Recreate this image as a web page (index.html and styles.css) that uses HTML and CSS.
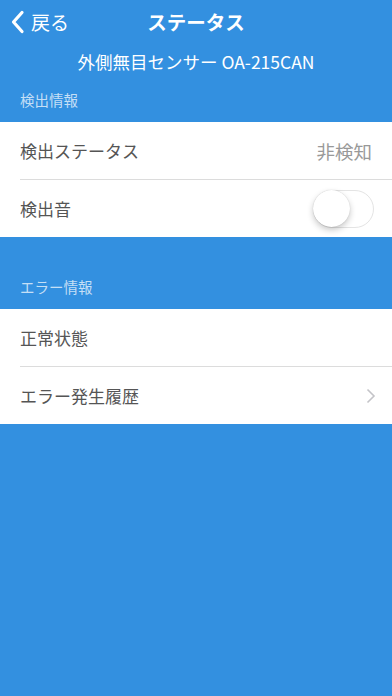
FILE: index.html
```html
<!DOCTYPE html>
<html lang="ja">
<head>
    <meta charset="UTF-8">
    <meta name="viewport" content="width=device-width, initial-scale=1.0">
    <title>ステータス</title>
    <link rel="stylesheet" href="styles.css">
</head>
<body>
    <header class="navbar">
        <a class="back" href="#">
            <svg width="15" height="24" viewBox="0 0 15 24"><path d="M12 2.5 L3.5 12 L12 21.5" fill="none" stroke="#fff" stroke-width="3.2" stroke-linecap="round" stroke-linejoin="round"/></svg>
            <span>戻る</span>
        </a>
        <h1 class="title">ステータス</h1>
    </header>

    <div class="device-name">外側無目センサー OA-215CAN</div>

    <div class="section-header">検出情報</div>
    <ul class="group">
        <li class="row">
            <span class="label">検出ステータス</span>
            <span class="value">非検知</span>
        </li>
        <li class="row">
            <span class="label">検出音</span>
            <span class="switch"><span class="knob"></span></span>
        </li>
    </ul>

    <div class="section-header spaced">エラー情報</div>
    <ul class="group">
        <li class="row">
            <span class="label">正常状態</span>
        </li>
        <li class="row">
            <span class="label">エラー発生履歴</span>
            <svg class="chevron" width="10" height="16" viewBox="0 0 10 16"><path d="M1.5 1.5 L8 8 L1.5 14.5" fill="none" stroke="#c4c4c8" stroke-width="1.6"/></svg>
        </li>
    </ul>
</body>
</html>
```

FILE: styles.css
```css
* {
    margin: 0;
    padding: 0;
    box-sizing: border-box;
}

body {
    font-family: "Noto Sans CJK JP", "Noto Sans", sans-serif;
    background: #3390e0;
    min-height: 100vh;
    color: #fff;
}

.navbar {
    position: relative;
    height: 44px;
    display: flex;
    align-items: center;
    justify-content: center;
}

.back {
    position: absolute;
    left: 10px;
    top: 10px;
    display: flex;
    align-items: center;
    gap: 6px;
    color: #fff;
    text-decoration: none;
    font-size: 19px;
}

.back span {
    line-height: 24px;
}

.title {
    font-size: 19.5px;
    font-weight: bold;
    line-height: 24px;
}

.device-name {
    text-align: center;
    font-size: 17.5px;
    line-height: 22px;
    padding-top: 7px;
}

.section-header {
    font-size: 14.5px;
    color: rgba(255, 255, 255, 0.72);
    line-height: 20px;
    padding: 17px 20px 0;
    height: 49px;
}

.section-header.spaced {
    padding-top: 40px;
    height: 72px;
}

.group {
    list-style: none;
    background: #fff;
}

.row {
    height: 57px;
    margin-left: 20px;
    padding-right: 18px;
    display: flex;
    align-items: center;
    justify-content: space-between;
    font-size: 17px;
    color: #555;
}

.row + .row {
    border-top: 1px solid #dcdcdc;
    height: 58px;
}

.value {
    color: #999;
    font-size: 18.5px;
    margin-right: 2px;
}

.switch {
    position: relative;
    width: 61px;
    height: 38px;
    border: 1.5px solid #e4e4e4;
    border-radius: 19px;
    background: #fff;
}

.knob {
    position: absolute;
    left: -1px;
    top: -1px;
    width: 37px;
    height: 37px;
    border-radius: 50%;
    background: #fff;
    box-shadow: 0 3px 6px rgba(0, 0, 0, 0.22), 0 0 1px rgba(0, 0, 0, 0.2);
}

.chevron {
    margin-right: -2px;
}
```
